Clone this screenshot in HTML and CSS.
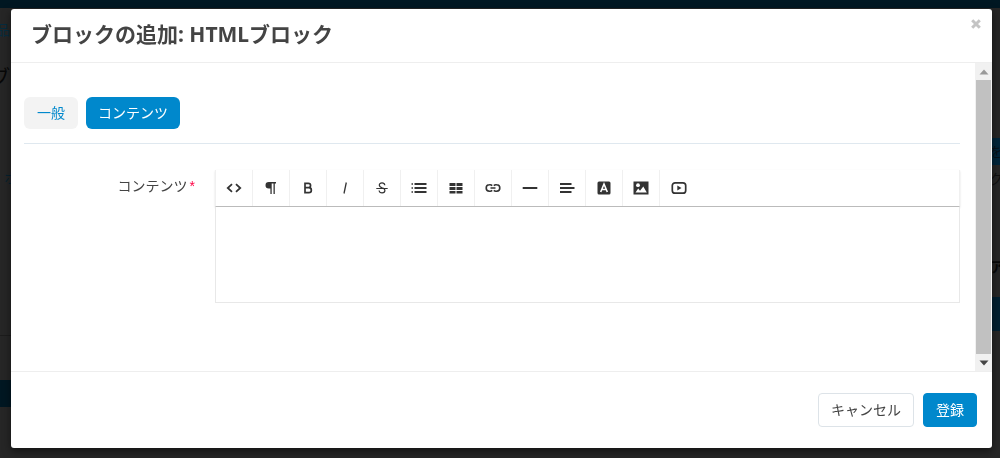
FILE: index.html
```html
<!DOCTYPE html>
<html lang="ja">
<head>
<meta charset="utf-8">
<meta name="viewport" content="width=device-width, initial-scale=1">
<title>ブロックの追加</title>
<link rel="stylesheet" href="styles.css">
</head>
<body>
<div class="page" aria-hidden="true">
  <div class="page-top"></div>
  <div class="page-content">
    <div class="page-left">
      <div class="crumb">商品</div>
      <div class="page-title">ブ</div>
      <div class="page-link">ホ</div>
      <div class="page-rule"></div>
      <div class="page-bar"></div>
    </div>
    <div class="page-right">
      <div class="page-button">を</div>
      <div class="page-note">ク</div>
      <div class="page-name">ア</div>
      <div class="page-panel"></div>
    </div>
  </div>
</div>

<div class="backdrop">
  <div class="modal" role="dialog" aria-labelledby="modal-title">
    <header class="modal-header">
      <h1 class="modal-title" id="modal-title">ブロックの追加: HTMLブロック</h1>
      <button class="close" type="button" aria-label="閉じる">
        <svg width="10" height="10" viewBox="0 0 10 10"><path d="M1.2 1.2 8.8 8.8M8.8 1.2 1.2 8.8" stroke="#c4c4c4" stroke-width="3"/></svg>
      </button>
    </header>

    <div class="modal-body">
      <form class="form" id="block-form">
        <nav class="tabs">
          <a class="tab" href="#general">一般</a>
          <a class="tab tab-active" href="#content">コンテンツ</a>
        </nav>
        <div class="field">
          <label class="label" for="content">コンテンツ<span class="required">*</span></label>
          <div class="editor">
            <div class="toolbar">
              <button class="tool" type="button" aria-label="HTML"><svg viewBox="0 0 16 16"><path d="M6 4.200 1.800 8 6 11.800M10 4.200 14.200 8 10 11.800" fill="none" stroke="currentColor" stroke-width="1.800"/></svg></button>
              <button class="tool" type="button" aria-label="書式"><svg viewBox="0 0 16 16"><path d="M5.800 2H13v1.400h-1.200v10.600h-1.300V3.400H8.700v10.600H7.400V8.600H5.800a3.300 3.300 0 0 1 0-6.600z" fill="currentColor"/></svg></button>
              <button class="tool" type="button" aria-label="太字"><svg viewBox="0 0 16 16"><path d="M5 3.400h3.400a2.100 2.100 0 0 1 0 4.300H5zM5 7.700h3.900a2.400 2.400 0 0 1 0 4.900H5z" fill="none" stroke="currentColor" stroke-width="1.700"/></svg></button>
              <button class="tool" type="button" aria-label="斜体"><svg viewBox="0 0 16 16"><path d="M9.300 2.500 7 13.500" stroke="currentColor" stroke-width="1.300"/></svg></button>
              <button class="tool" type="button" aria-label="取り消し線"><svg viewBox="0 0 16 16"><path d="M10.800 5.200C10.600 3.600 9.500 2.900 8 2.900c-1.600 0-2.700.8-2.700 2.200 0 1.500 1.200 2.200 2.800 2.700 1.800.5 2.800 1.200 2.800 2.700 0 1.400-1.200 2.400-2.800 2.400s-2.800-.8-3-2.400" fill="none" stroke="currentColor" stroke-width="1.200"/><path d="M2.300 8.500h11.400" stroke="currentColor"/></svg></button>
              <button class="tool" type="button" aria-label="リスト"><svg viewBox="0 0 16 16"><path d="M3.500 4H15.500M3.500 8H15.500M3.500 12H15.500" stroke="currentColor" stroke-width="2"/><path d="M.5 4H2M.5 8H2M.5 12H2" stroke="currentColor" stroke-width="1.700"/></svg></button>
              <button class="tool" type="button" aria-label="表"><svg viewBox="0 0 16 16"><path d="M1.500 3h6v3h-6zM8.500 3h6v3h-6zM1.500 7h6v3h-6zM8.500 7h6v3h-6zM1.500 11h6v2.500h-6zM8.500 11h6v2.500h-6z" fill="currentColor"/></svg></button>
              <button class="tool" type="button" aria-label="リンク"><svg viewBox="0 0 16 16"><path d="M7.200 10.400A3 3 0 0 1 4.400 11.200a3.200 3.200 0 0 1 0-6.400A3 3 0 0 1 7.200 5.600M8.800 5.600A3 3 0 0 1 11.600 4.800a3.200 3.200 0 0 1 0 6.400A3 3 0 0 1 8.800 10.400M5.500 8h5" fill="none" stroke="currentColor" stroke-width="1.600"/></svg></button>
              <button class="tool" type="button" aria-label="水平線"><svg viewBox="0 0 16 16"><path d="M.7 8H15.300" stroke="currentColor" stroke-width="2"/></svg></button>
              <button class="tool" type="button" aria-label="配置"><svg viewBox="0 0 16 16"><path d="M1 4H12.500M1 8H15.500M1 12H12.500" stroke="currentColor" stroke-width="2"/></svg></button>
              <button class="tool" type="button" aria-label="文字色"><svg viewBox="0 0 16 16"><rect x="1.500" y="1.500" width="13" height="13" rx="1.500" fill="currentColor"/><path d="M4.700 12 8 4l3.300 8M5.900 9.500h4.200" fill="none" stroke="#fff" stroke-width="1.600"/></svg></button>
              <button class="tool" type="button" aria-label="画像"><svg viewBox="0 0 16 16"><path d="M.5 1.500h15v13H.5z" fill="currentColor"/><circle cx="5" cy="5.200" r="1.900" fill="#fff"/><path d="M2.500 12.500 5.200 8.600 7 10.800 10.300 6.500 13.800 12.500z" fill="#fff"/></svg></button>
              <button class="tool" type="button" aria-label="動画"><svg viewBox="0 0 16 16"><rect x="1.300" y="2.800" width="13.400" height="10.400" rx="2.800" fill="none" stroke="currentColor" stroke-width="1.700"/><path d="M6.300 5.600 10.500 8 6.300 10.400z" fill="currentColor"/></svg></button>
            </div>
            <textarea class="editor-text" id="content" required></textarea>
          </div>
        </div>
      </form>
      <div class="scrollbar" aria-hidden="true">
        <svg class="arrow" viewBox="0 0 17 17"><path d="M4.500 11.500h9l-4.500-5z" fill="#999"/></svg>
        <div class="thumb"></div>
        <svg class="arrow" viewBox="0 0 17 17"><path d="M4.500 6.500h9l-4.500 5z" fill="#444"/></svg>
      </div>
    </div>

    <footer class="modal-footer">
      <button class="button" type="button">キャンセル</button>
      <button class="button button-primary" type="submit" form="block-form">登録</button>
    </footer>
  </div>
</div>
</body>
</html>
```
FILE: styles.css
```css
* {
  box-sizing: border-box;
}

body {
  margin: 0;
  background: #262626;
  color: #444;
  font-family: "Liberation Sans", "Noto Sans CJK JP", sans-serif;
  font-size: 14px;
  line-height: 20px;
}

button {
  font: inherit;
  cursor: pointer;
}

/* Dimmed page under the dialog */
.page {
  height: 100vh;
  overflow: hidden;
}

.page-top {
  height: 8px;
  background: #001722;
}

.page-content {
  display: flex;
  justify-content: space-between;
}

.page-left,
.page-right {
  width: 14px;
  overflow: hidden;
  white-space: nowrap;
}

.crumb {
  display: flex;
  justify-content: flex-end;
  padding: 12px 4px 24px 0;
  color: #062c3f;
}

.page-title {
  display: flex;
  justify-content: flex-end;
  padding: 4px 4px 4px 0;
  color: #080808;
  font-size: 20px;
}

.page-link {
  padding: 76px 0 0 4px;
  color: #06222f;
}

.page-rule {
  height: 148px;
  border-bottom: 1px solid #1c1c1c;
}

.page-bar {
  height: 27px;
  margin-top: 44px;
  background: #001722;
}

.page-right {
  padding-top: 130px;
}

.page-button {
  height: 27px;
  padding: 4px 0 4px 3px;
  background: #00253a;
  color: #081118;
}

.page-note {
  padding: 4px 0 0 3px;
  color: #101010;
}

.page-name {
  padding: 68px 0 20px 4px;
  color: #080808;
  font-weight: bold;
}

.page-panel {
  height: 34px;
  background: #001f30;
}

/* Dialog */
.backdrop {
  position: fixed;
  inset: 0;
  display: flex;
  padding: 9px 8px 10px 11px;
}

.modal {
  display: flex;
  flex: 1;
  flex-direction: column;
  overflow: hidden;
  border-radius: 3px;
  background: #fff;
  box-shadow: 0 3px 9px rgba(0, 0, 0, 0.5);
}

.modal-header {
  display: flex;
  align-items: flex-start;
  justify-content: space-between;
  padding: 10px 11px 13px 20px;
  border-bottom: 1px solid #eee;
}

.modal-title {
  margin: 0;
  font-family: "Noto Sans", "Noto Sans CJK JP", sans-serif;
  font-size: 21px;
  font-weight: bold;
  line-height: 30px;
}

.close {
  display: flex;
  padding: 0;
  border: 0;
  background: none;
}

.modal-body {
  display: flex;
  flex: 1;
  min-height: 0;
}

.form {
  flex: 1;
  padding: 34px 15px 0 13px;
}

.tabs {
  display: flex;
  gap: 8px;
  padding-bottom: 14px;
  border-bottom: 1px solid #dfe8ef;
}

.tab {
  padding: 6px 13px;
  border-radius: 6px;
  background: #f3f3f3;
  color: #0088cc;
  text-decoration: none;
}

.tab-active {
  padding: 6px 12px;
  background: #0088cc;
  color: #fff;
}

.field {
  display: flex;
  gap: 20px;
  padding-top: 26px;
}

.label {
  width: 171px;
  padding-top: 6px;
  text-align: right;
}

.required {
  padding-left: 2px;
  color: #f04;
  font-size: 14px;
}

.editor {
  flex: 1;
}

.toolbar {
  display: flex;
  border: 1px solid #f0f0f0;
  border-top: 0;
  border-bottom-color: #bbb;
  box-shadow: 0 1px 2px rgba(0, 0, 0, 0.12);
}

.tool {
  display: flex;
  align-items: center;
  justify-content: center;
  width: 37px;
  height: 36px;
  padding: 0;
  border: 0;
  border-right: 1px solid #f0f0f0;
  background: #fff;
  color: #333;
}

.tool:last-child {
  border-right: 0;
}

.tool svg {
  width: 16px;
  height: 16px;
}

.editor-text {
  display: block;
  width: 100%;
  height: 96px;
  padding: 12px;
  border: 1px solid #e8e8e8;
  border-top: 0;
  outline: 0;
  resize: none;
  font: inherit;
}

.scrollbar {
  display: flex;
  flex-direction: column;
  width: 17px;
  background: #f1f1f1;
}

.arrow {
  width: 17px;
  height: 17px;
}

.thumb {
  flex: 1;
  margin: 0 1px;
  background: #c1c1c1;
}

.modal-footer {
  display: flex;
  justify-content: flex-end;
  gap: 9px;
  padding: 21px 15px;
  border-top: 1px solid #eee;
}

.button {
  padding: 6px 12px;
  border: 1px solid #dde3e8;
  border-radius: 4px;
  background: #fff;
  color: #444;
}

.button-primary {
  border-color: #0088cc;
  background: #0088cc;
  color: #fff;
}
```
